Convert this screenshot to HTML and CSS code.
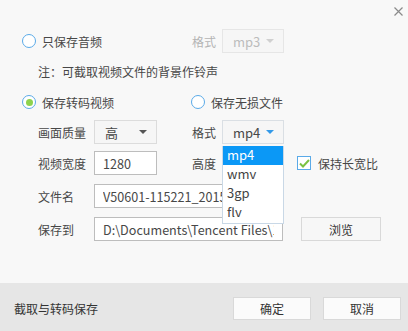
FILE: index.html
```html
<!DOCTYPE html>
<html lang="zh-CN">
<head>
  <meta charset="UTF-8">
  <title>截取与转码保存</title>
  <link rel="stylesheet" href="styles.css">
</head>
<body>
  <div class="dialog">
    <!-- close button -->
    <span class="close">
      <svg width="9" height="9" viewBox="0 0 9 9"><path d="M0.5 0.5L8.5 8.5M8.5 0.5L0.5 8.5" stroke="#8a8a8a" stroke-width="1.2"/></svg>
    </span>

    <div class="content">
      <div class="row row-audio">
        <label class="radio radio-first"><span class="radio-dot"></span>只保存音频</label>
        <span class="label2 muted">格式</span>
        <div class="select disabled"><span>mp3</span><i class="arrow"></i></div>
      </div>

      <div class="note">注：可截取视频文件的背景作铃声</div>

      <div class="row row-video">
        <label class="radio radio-first"><span class="radio-dot checked"></span>保存转码视频</label>
        <label class="radio"><span class="radio-dot"></span>保存无损文件</label>
      </div>

      <div class="row field-row">
        <span class="label">画面质量</span>
        <div class="select small"><span>高</span><i class="arrow"></i></div>
        <span class="label2">格式</span>
        <div class="select open">
          <span>mp4</span><i class="arrow"></i>
          <ul class="dropdown">
            <li class="active">mp4</li>
            <li>wmv</li>
            <li>3gp</li>
            <li>flv</li>
          </ul>
        </div>
      </div>

      <div class="row field-row row-size">
        <span class="label">视频宽度</span>
        <input class="input small" type="text" value="1280">
        <span class="label2">高度</span>
        <input class="input" type="text" value="720">
        <label class="checkbox"><span class="check-box">
          <svg width="11" height="9" viewBox="0 0 11 9"><path d="M1 4.5L4 7.5L10 1" fill="none" stroke="#7cc242" stroke-width="2"/></svg>
        </span>保持长宽比</label>
      </div>

      <div class="row field-row row-file">
        <span class="label">文件名</span>
        <input class="input wide" type="text" value="V50601-115221_20150601115221">
      </div>

      <div class="row field-row row-path">
        <span class="label">保存到</span>
        <input class="input wide" type="text" value="D:\Documents\Tencent Files\1234567890\Video">
        <button class="btn browse">浏览</button>
      </div>
    </div>

    <div class="footer">
      <span class="footer-title">截取与转码保存</span>
      <div class="footer-buttons">
        <button class="btn">确定</button>
        <button class="btn">取消</button>
      </div>
    </div>
  </div>
</body>
</html>
```

FILE: styles.css
```css
* {
  box-sizing: border-box;
}
body {
  margin: 0;
  font-family: "Noto Sans CJK SC", "Noto Sans", sans-serif;
  font-size: 12px;
  color: #474747;
}
.dialog {
  position: relative;
  width: 408px;
  height: 331px;
  background-color: #f8f8f8;
  display: flex;
  flex-direction: column;
}
.close {
  position: absolute;
  top: 7px;
  left: 394px;
  width: 9px;
  height: 9px;
  display: flex;
}
.content {
  height: 283px;
  padding-top: 29px;
}
.row {
  display: flex;
  align-items: center;
}
.row-audio {
  height: 24px;
  padding-left: 22px;
}
.note {
  margin-top: 9px;
  height: 20px;
  line-height: 20px;
  padding-left: 38px;
}
.row-video {
  margin-top: 10px;
  height: 20px;
  padding-left: 22px;
}
.radio {
  display: flex;
  align-items: center;
}
.radio-first {
  width: 169px;
}
.row-audio .radio-first {
  width: 170px;
}
.radio-dot {
  width: 14px;
  height: 14px;
  border: 1.2px solid #5aaae8;
  border-radius: 50%;
  background-color: #fff;
  margin-right: 6px;
  display: flex;
  align-items: center;
  justify-content: center;
}
.radio-dot.checked::after {
  content: "";
  width: 7px;
  height: 7px;
  border-radius: 50%;
  background-color: #8ed24e;
}
.field-row {
  margin-top: 8px;
  height: 24px;
  padding-left: 38px;
}
.row-size {
  margin-top: 7px;
}
.row-file,
.row-path {
  margin-top: 9px;
}
.label {
  width: 56px;
}
.label2 {
  width: 30px;
}
.field-row .label2 {
  margin-left: 35px;
}
.muted {
  color: #b4b4b4;
}
.select {
  position: relative;
  width: 62px;
  height: 24px;
  border: 1px solid #dcdcdc;
  background-color: #f6f6f6;
  display: flex;
  align-items: center;
  justify-content: space-between;
  padding: 0 9px 0 10px;
  font-size: 13px;
}
.select.small {
  width: 63px;
}
.select.disabled {
  color: #bcbcbc;
  border-color: #e6e6e6;
}
.select.open {
  border-color: #dadfe4;
}
.arrow {
  width: 0;
  height: 0;
  border-left: 4px solid transparent;
  border-right: 4px solid transparent;
  border-top: 4px solid #555;
}
.disabled .arrow {
  border-top-color: #d0d0d0;
}
.open .arrow {
  border-top-color: #3399e8;
}
.dropdown {
  position: absolute;
  top: 25px;
  left: -1px;
  width: 62px;
  margin: 0;
  padding: 0 0 1px;
  list-style: none;
  background-color: #fff;
  border: 1px solid #c9d8e6;
  border-top: none;
  z-index: 2;
}
.dropdown li {
  height: 19px;
  line-height: 18px;
  padding-left: 4px;
  font-size: 13px;
  color: #444;
}
.dropdown li.active {
  background-color: #0b98f6;
  color: #fff;
}
.input {
  width: 62px;
  height: 24px;
  border: 1px solid #bdbdbd;
  background-color: #fff;
  padding: 0 8px;
  font-family: inherit;
  font-size: 12.6px;
  color: #474747;
  outline: none;
}
.input.small {
  width: 63px;
}
.input.wide {
  width: 189px;
}
.checkbox {
  display: flex;
  align-items: center;
  margin-left: 13px;
}
.check-box {
  width: 14px;
  height: 14px;
  border: 1px solid #5aaae8;
  background-color: #fff;
  margin-right: 7px;
  display: flex;
  align-items: center;
  justify-content: center;
}
.btn {
  width: 78px;
  height: 23px;
  border: 1px solid #d9d9d9;
  background-color: #fbfbfb;
  font-family: inherit;
  font-size: 12px;
  color: #333;
  padding: 0;
}
.browse {
  width: 80px;
  height: 24px;
  margin-left: 18px;
  background-color: #f7f7f7;
}
.footer {
  flex: 1;
  background-color: #e6e6e6;
  display: flex;
  align-items: center;
  justify-content: space-between;
  padding: 2px 7px 0 14px;
  color: #333;
}
.footer-buttons {
  display: flex;
  gap: 12px;
}
```
